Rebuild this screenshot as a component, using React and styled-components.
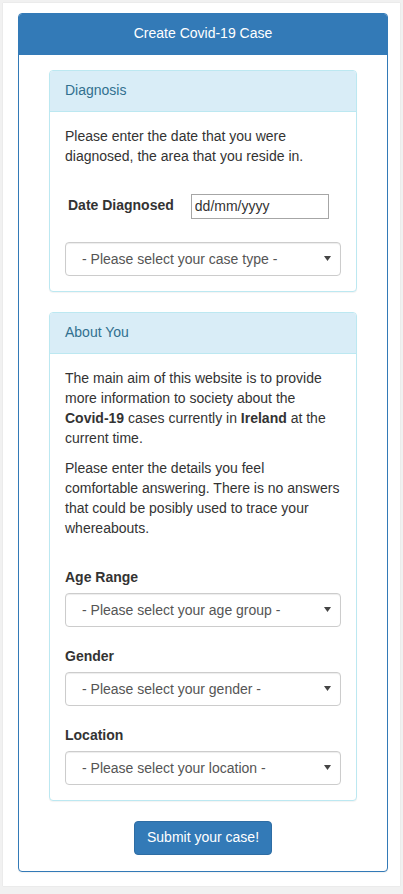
import styled, { createGlobalStyle } from "styled-components";

const GlobalStyle = createGlobalStyle`
  * { box-sizing: border-box; }
  body {
    margin: 0;
    background: #f1f1f1;
    font-family: "Liberation Sans", Arial, sans-serif;
    font-size: 14px;
    line-height: 1.42857;
    color: #333;
  }
`;

const arrow =
  "url(\"data:image/svg+xml;utf8,<svg xmlns='http://www.w3.org/2000/svg' width='7' height='5'><polygon points='0,0 7,0 3.5,5' fill='%23444'/></svg>\")";

const Sheet = styled.div`
  margin: 3px 3px 10px 3px;
  background: #fff;
  padding: 10px 12px 14px 15px;
  box-shadow: 0 0 1px rgba(0, 0, 0, 0.15);
`;

const Panel = styled.div`
  border: 1px solid ${(p) => (p.info ? "#bce8f1" : "#337ab7")};
  border-radius: 4px;
  background: #fff;
  box-shadow: 0 1px 1px rgba(0, 0, 0, 0.05);
  & + & {
    margin-top: 20px;
  }
`;

const PanelHeading = styled.div`
  padding: 10px 15px;
  background: ${(p) => (p.info ? "#d9edf7" : "#337ab7")};
  color: ${(p) => (p.info ? "#31708f" : "#fff")};
  text-align: ${(p) => (p.info ? "left" : "center")};
  border-bottom: 1px solid ${(p) => (p.info ? "#bce8f1" : "#337ab7")};
  border-radius: 3px 3px 0 0;
`;

const PanelBody = styled.div`
  padding: ${(p) => (p.wide ? "15px 30px 16px" : "15px")};
`;

const Text = styled.p`
  margin: 0 0 10px;
`;

const DateRow = styled.div`
  display: flex;
  align-items: center;
  gap: 17px;
  margin-top: 27px;
  padding-left: 3px;
`;

const Label = styled.label`
  display: block;
  font-weight: bold;
  margin-bottom: ${(p) => (p.inline ? "0" : "5px")};
`;

const DateInput = styled.input`
  width: 138px;
  height: 25px;
  padding: 1px 3px;
  border: 1px solid #a6a6a6;
  font-family: inherit;
  font-size: 14px;
  color: #333;
  outline: none;
  &::placeholder {
    color: #333;
  }
`;

const Select = styled.select`
  display: block;
  width: 100%;
  height: 34px;
  margin-top: ${(p) => p.top || 0}px;
  padding: 6px 12px 6px 16px;
  font-family: inherit;
  font-size: 14px;
  color: #555;
  background: #fff ${arrow} no-repeat right 9px center;
  border: 1px solid #ccc;
  border-radius: 4px;
  box-shadow: inset 0 1px 1px rgba(0, 0, 0, 0.075);
  appearance: none;
  outline: none;
`;

const Field = styled.div`
  margin-top: 29px;
  & + & {
    margin-top: 20px;
  }
`;

const Actions = styled.div`
  display: flex;
  justify-content: center;
  margin-top: 20px;
`;

const SubmitButton = styled.button`
  padding: 6px 12px;
  font-family: inherit;
  font-size: 14px;
  line-height: 1.42857;
  color: #fff;
  background: #337ab7;
  border: 1px solid #2e6da4;
  border-radius: 4px;
  cursor: pointer;
`;

export default function App() {
  return (
    <>
      <GlobalStyle />
      <Sheet>
        <Panel>
          <PanelHeading>Create Covid-19 Case</PanelHeading>
          <PanelBody wide>
            <Panel info>
              <PanelHeading info>Diagnosis</PanelHeading>
              <PanelBody>
                <Text>
                  Please enter the date that you were diagnosed, the area that
                  you reside in.
                </Text>
                <DateRow>
                  <Label inline>Date Diagnosed</Label>
                  <DateInput type="text" placeholder="dd/mm/yyyy" />
                </DateRow>
                <Select top={23} defaultValue="">
                  <option value="">- Please select your case type -</option>
                </Select>
              </PanelBody>
            </Panel>

            <Panel info>
              <PanelHeading info>About You</PanelHeading>
              <PanelBody>
                <Text>
                  The main aim of this website is to provide more information
                  to society about the <b>Covid-19</b> cases currently in{" "}
                  <b>Ireland</b> at the current time.
                </Text>
                <Text>
                  Please enter the details you feel comfortable answering.
                  There is no answers that could be posibly used to trace your
                  whereabouts.
                </Text>
                <Field>
                  <Label>Age Range</Label>
                  <Select defaultValue="">
                    <option value="">- Please select your age group -</option>
                  </Select>
                </Field>
                <Field>
                  <Label>Gender</Label>
                  <Select defaultValue="">
                    <option value="">- Please select your gender -</option>
                  </Select>
                </Field>
                <Field>
                  <Label>Location</Label>
                  <Select defaultValue="">
                    <option value="">- Please select your location -</option>
                  </Select>
                </Field>
              </PanelBody>
            </Panel>

            <Actions>
              <SubmitButton type="button">Submit your case!</SubmitButton>
            </Actions>
          </PanelBody>
        </Panel>
      </Sheet>
    </>
  );
}
